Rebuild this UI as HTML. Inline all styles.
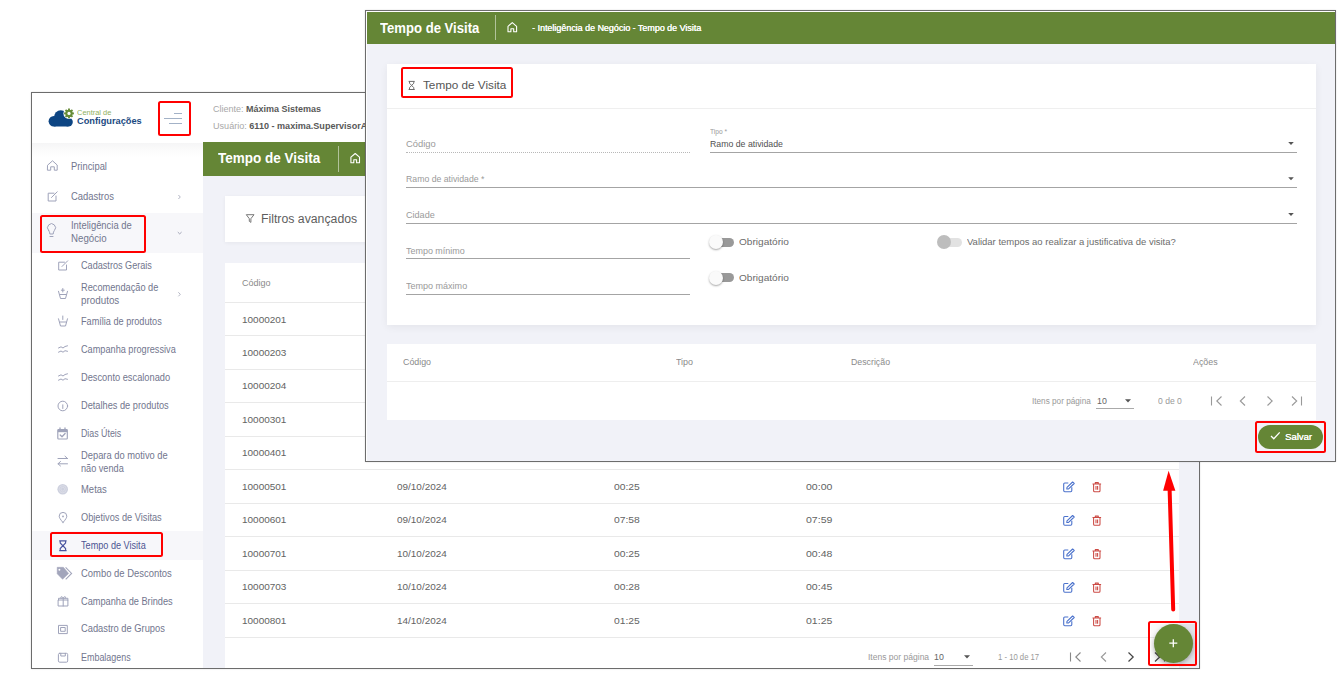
<!DOCTYPE html><html><head><meta charset="utf-8"><style>
html,body{margin:0;padding:0;}
body{width:1344px;height:676px;position:relative;overflow:hidden;background:#fff;font-family:"Liberation Sans",sans-serif;}
.t{position:absolute;white-space:nowrap;}
.r{position:absolute;box-sizing:border-box;}
svg{position:absolute;overflow:visible;}
</style></head><body>
<div class="r" style="left:31px;top:92px;width:1169px;height:577px;border:1px solid #6c6c6c;background:#fff;box-shadow:0 0 1.5px rgba(0,0,0,0.15);"></div>
<div class="r" style="left:203px;top:175px;width:996px;height:493px;background:#f1f2f8;"></div>
<div class="r" style="left:32px;top:142.5px;width:171px;height:14px;background:linear-gradient(#f5f5f6,#fcfcfc 60%,#fff);"></div>
<svg style="left:0;top:0" width="1344" height="676" viewBox="0 0 1344 676"><g fill="#0d4583">
<circle cx="53.8" cy="121.3" r="5.2"/><circle cx="60.8" cy="117" r="6.8"/><circle cx="68.3" cy="122" r="4.5"/>
<rect x="53.8" y="117" width="14.5" height="9.5"/></g>
<circle cx="69" cy="113.4" r="5.6" fill="#fff"/>
<g transform="translate(69,113.4)" fill="#678c37">
<circle r="3.7"/>
<rect x="-0.95" y="-4.9" width="1.9" height="9.8"/>
<rect x="-0.95" y="-4.9" width="1.9" height="9.8" transform="rotate(45)"/>
<rect x="-0.95" y="-4.9" width="1.9" height="9.8" transform="rotate(90)"/>
<rect x="-0.95" y="-4.9" width="1.9" height="9.8" transform="rotate(135)"/>
<circle r="1.6" fill="#fff"/>
</g></svg>
<div class="t" id="t1" style="left:77px;top:107.8px;font-size:7.5px;line-height:10px;color:#8fb060;font-weight:normal;transform:scaleX(0.9938);transform-origin:0 50%;">Central de</div>
<div class="t" id="t2" style="left:77px;top:115.3px;font-size:9.6px;line-height:12px;color:#1b4a82;font-weight:bold;transform:scaleX(0.9643);transform-origin:0 50%;">Configurações</div>
<div class="r" style="left:174px;top:112.7px;width:8.2px;height:1.1px;background:#a3b2c7;"></div>
<div class="r" style="left:164.2px;top:117.7px;width:18px;height:1.1px;background:#a3b2c7;"></div>
<div class="r" style="left:168.8px;top:122.7px;width:13.4px;height:1.1px;background:#a3b2c7;"></div>
<div class="r" style="left:158.4px;top:101.4px;width:32.8px;height:34.3px;border:2.9px solid #ff0000;border-radius:2.5px;"></div>
<div class="t" id="t3" style="left:212.7px;top:101.7px;font-size:9.5px;line-height:14px;color:#a8a8a8;font-weight:normal;transform:scaleX(0.9472);transform-origin:0 50%;">Cliente: <b style="color:#585858">Máxima Sistemas</b></div>
<div class="t" id="t4" style="left:212.7px;top:119.3px;font-size:9.5px;line-height:14px;color:#a8a8a8;font-weight:normal;transform:scaleX(0.9546);transform-origin:0 50%;">Usuário: <b style="color:#585858">6110 - maxima.SupervisorA</b></div>
<div class="r" style="left:203px;top:142px;width:996px;height:33.5px;background:#658636;"></div>
<div class="t" id="t5" style="left:218.4px;top:148.3px;font-size:14px;line-height:20px;color:#fff;font-weight:bold;transform:scaleX(0.9651);transform-origin:0 50%;">Tempo de Visita</div>
<div class="r" style="left:337.6px;top:145.6px;width:1.2px;height:26px;background:rgba(255,255,255,0.5);"></div>
<svg style="left:0;top:0" width="1344" height="676" viewBox="0 0 1344 676"><path d="M350.9 162.7 V157.2 L355.2 153.5 L359.5 157.2 V162.7 H356.6 V159.7 H353.8 V162.7 Z" fill="none" stroke="#fff" stroke-width="1.1" stroke-linejoin="round"/></svg>
<div class="t" id="t6" style="left:70.8px;top:159.5px;font-size:10.1px;line-height:13px;color:#72768e;font-weight:normal;transform:scaleX(0.9283);transform-origin:0 50%;">Principal</div>
<div class="t" id="t7" style="left:70.8px;top:190.0px;font-size:10.1px;line-height:13px;color:#72768e;font-weight:normal;transform:scaleX(0.9333);transform-origin:0 50%;">Cadastros</div>
<div class="r" style="left:31.5px;top:212.5px;width:171.5px;height:40.5px;background:#f7f7fa;"></div>
<div class="t" id="t8" style="left:70.8px;top:219.3px;font-size:10.1px;line-height:13px;color:#72768e;font-weight:normal;transform:scaleX(0.9330);transform-origin:0 50%;">Inteligência de</div>
<div class="t" id="t9" style="left:70.8px;top:232.3px;font-size:10.1px;line-height:13px;color:#72768e;font-weight:normal;transform:scaleX(0.9601);transform-origin:0 50%;">Negócio</div>
<div class="r" style="left:40.4px;top:214.9px;width:105.3px;height:37.8px;border:2.9px solid #ff0000;border-radius:2.5px;"></div>
<div class="r" style="left:31.5px;top:531px;width:171.5px;height:29px;background:#f7f7fa;"></div>
<div class="t" id="t10" style="left:81.3px;top:259.3px;font-size:10.1px;line-height:13px;color:#72768e;font-weight:normal;transform:scaleX(0.9029);transform-origin:0 50%;">Cadastros Gerais</div>
<div class="t" id="t11" style="left:81.3px;top:280.5px;font-size:10.1px;line-height:13px;color:#72768e;font-weight:normal;transform:scaleX(0.9126);transform-origin:0 50%;">Recomendação de</div>
<div class="t" id="t12" style="left:81.3px;top:293.8px;font-size:10.1px;line-height:13px;color:#72768e;font-weight:normal;transform:scaleX(0.9745);transform-origin:0 50%;">produtos</div>
<div class="t" id="t13" style="left:81.3px;top:315.4px;font-size:10.1px;line-height:13px;color:#72768e;font-weight:normal;transform:scaleX(0.9048);transform-origin:0 50%;">Família de produtos</div>
<div class="t" id="t14" style="left:81.3px;top:343.3px;font-size:10.1px;line-height:13px;color:#72768e;font-weight:normal;transform:scaleX(0.9077);transform-origin:0 50%;">Campanha progressiva</div>
<div class="t" id="t15" style="left:81.3px;top:371.1px;font-size:10.1px;line-height:13px;color:#72768e;font-weight:normal;transform:scaleX(0.9180);transform-origin:0 50%;">Desconto escalonado</div>
<div class="t" id="t16" style="left:81.3px;top:399.1px;font-size:10.1px;line-height:13px;color:#72768e;font-weight:normal;transform:scaleX(0.9142);transform-origin:0 50%;">Detalhes de produtos</div>
<div class="t" id="t17" style="left:81.3px;top:427.1px;font-size:10.1px;line-height:13px;color:#72768e;font-weight:normal;transform:scaleX(0.8739);transform-origin:0 50%;">Dias Úteis</div>
<div class="t" id="t18" style="left:81.3px;top:448.9px;font-size:10.1px;line-height:13px;color:#72768e;font-weight:normal;transform:scaleX(0.9257);transform-origin:0 50%;">Depara do motivo de</div>
<div class="t" id="t19" style="left:81.3px;top:462.2px;font-size:10.1px;line-height:13px;color:#72768e;font-weight:normal;transform:scaleX(0.9060);transform-origin:0 50%;">não venda</div>
<div class="t" id="t20" style="left:81.3px;top:482.8px;font-size:10.1px;line-height:13px;color:#72768e;font-weight:normal;transform:scaleX(0.9363);transform-origin:0 50%;">Metas</div>
<div class="t" id="t21" style="left:81.3px;top:510.79999999999995px;font-size:10.1px;line-height:13px;color:#72768e;font-weight:normal;transform:scaleX(0.9125);transform-origin:0 50%;">Objetivos de Visitas</div>
<div class="t" id="t22" style="left:81.3px;top:538.6px;font-size:10.1px;line-height:13px;color:#4d5592;font-weight:normal;transform:scaleX(0.9034);transform-origin:0 50%;">Tempo de Visita</div>
<div class="t" id="t23" style="left:81.3px;top:566.6px;font-size:10.1px;line-height:13px;color:#72768e;font-weight:normal;transform:scaleX(0.9348);transform-origin:0 50%;">Combo de Descontos</div>
<div class="t" id="t24" style="left:81.3px;top:594.8px;font-size:10.1px;line-height:13px;color:#72768e;font-weight:normal;transform:scaleX(0.9132);transform-origin:0 50%;">Campanha de Brindes</div>
<div class="t" id="t25" style="left:81.3px;top:622.3px;font-size:10.1px;line-height:13px;color:#72768e;font-weight:normal;transform:scaleX(0.9222);transform-origin:0 50%;">Cadastro de Grupos</div>
<div class="t" id="t26" style="left:81.3px;top:650.5px;font-size:10.1px;line-height:13px;color:#72768e;font-weight:normal;transform:scaleX(0.8857);transform-origin:0 50%;">Embalagens</div>
<div class="r" style="left:50.4px;top:532.1999999999999px;width:112.8px;height:24.8px;border:2.9px solid #ff0000;border-radius:2.5px;"></div>
<svg style="left:0;top:0" width="1344" height="676" viewBox="0 0 1344 676">
<path d="M178.4 195 L180.3 197 L178.4 199" fill="none" stroke="#a9acbc" stroke-width="0.9"/>
<path d="M178.4 292.3 L180.3 294.3 L178.4 296.3" fill="none" stroke="#a9acbc" stroke-width="0.9"/>
<path d="M177.8 232.1 L179.7 233.9 L181.6 232.1" fill="none" stroke="#9a9db0" stroke-width="0.9"/>
</svg>
<svg style="left:0;top:0" width="1344" height="676" viewBox="0 0 1344 676">
<path d="M47.8 165 L52.5 160.8 L57.2 165 V170.2 H54.3 V166.8 H50.7 V170.2 H47.8 Z" fill="none" stroke="#9fa3ba" stroke-width="1" stroke-linejoin="round" stroke-linecap="round"/>
<path d="M54 193.2 H48.2 V201 H56 V196" fill="none" stroke="#9fa3ba" stroke-width="1" stroke-linejoin="round" stroke-linecap="round"/><path d="M51.5 197.5 L57.2 191.8" fill="none" stroke="#9fa3ba" stroke-width="1" stroke-linejoin="round" stroke-linecap="round"/>
<path d="M48.6 230.5 A4 4 0 1 1 54.4 230.5 C53.6 231.6 53.2 232.5 53.2 234 H49.8 C49.8 232.5 49.4 231.6 48.6 230.5 Z" fill="none" stroke="#9fa3ba" stroke-width="1" stroke-linejoin="round" stroke-linecap="round"/><path d="M50 236.5 H53" fill="none" stroke="#9fa3ba" stroke-width="1" stroke-linejoin="round" stroke-linecap="round"/>
<path d="M64.5 262.2 H58.7 V270 H66.5 V265" fill="none" stroke="#9fa3ba" stroke-width="1" stroke-linejoin="round" stroke-linecap="round"/><path d="M62 266.5 L67.7 260.8" fill="none" stroke="#9fa3ba" stroke-width="1" stroke-linejoin="round" stroke-linecap="round"/>
<path d="M58.5 291.3 L60.5 298.5 H65.5 L67.5 291.3 M60 294.5 H66 M62.8 288.5 V292 M61.3 290.2 H64.3" fill="none" stroke="#9fa3ba" stroke-width="1" stroke-linejoin="round" stroke-linecap="round"/>
<path d="M58.5 318.8 L60.5 326 H65.5 L67.5 318.8 M60 322 H66 M62.8 316 V319.5" fill="none" stroke="#9fa3ba" stroke-width="1" stroke-linejoin="round" stroke-linecap="round"/>
<path d="M58.5 348 L61 346.8 L63 348 L65 346.5 L67.5 345.8 M58.5 352.2 L61 351 L63 352.2 L65 350.7 L67.5 351.3" fill="none" stroke="#9fa3ba" stroke-width="1" stroke-linejoin="round" stroke-linecap="round"/>
<path d="M58.5 376 L61 374.8 L63 376 L65 374.5 L67.5 373.8 M58.5 380.2 L61 379 L63 380.2 L65 378.7 L67.5 379.3" fill="none" stroke="#9fa3ba" stroke-width="1" stroke-linejoin="round" stroke-linecap="round"/>
<circle cx="62.8" cy="406" r="4.8" fill="none" stroke="#9fa3ba" stroke-width="1" stroke-linejoin="round" stroke-linecap="round"/><path d="M62.8 404.8 V408.5" fill="none" stroke="#9fa3ba" stroke-width="1" stroke-linejoin="round" stroke-linecap="round"/>
<rect x="57.8" y="429.6" width="9.5" height="9.4" rx="0.8" fill="none" stroke="#9fa3ba" stroke-linejoin="round" stroke-linecap="round" stroke-width="1.15"/><rect x="57.8" y="429.6" width="9.5" height="2.6" fill="#9fa3ba"/><path d="M60 428 V430 M65 428 V430 M60.2 435 L62 436.7 L65.1 433.5" fill="none" stroke="#9fa3ba" stroke-linejoin="round" stroke-linecap="round" stroke-width="1.3"/>
<path d="M58 458.5 H67.5 M65 456.2 L67.5 458.5 M67.5 463.8 H58 M60.5 461.5 L58 463.8 L60.5 466" fill="none" stroke="#9fa3ba" stroke-width="1" stroke-linejoin="round" stroke-linecap="round"/>
<circle cx="62.7" cy="489.2" r="5.3" fill="#cdd0de"/><circle cx="62.7" cy="489.2" r="3.6" fill="none" stroke="#dfe1ea" stroke-width="0.7"/><circle cx="62.7" cy="489.2" r="1.9" fill="none" stroke="#dfe1ea" stroke-width="0.7"/>
<path d="M63 522.5 C60 519 59.2 517.5 59.2 516.2 A3.8 3.8 0 0 1 66.8 516.2 C66.8 517.5 66 519 63 522.5 Z" fill="none" stroke="#9fa3ba" stroke-width="1" stroke-linejoin="round" stroke-linecap="round"/><circle cx="63" cy="516.4" r="0.9" fill="#9fa3ba"/>
<path d="M59.2 540.9 H66.6 M59.2 550.6 H66.6 M60.2 541 V543 L62.9 545.75 L60.2 548.5 V550.5 M65.6 541 V543 L62.9 545.75 L65.6 548.5 V550.5" fill="none" stroke="#4a55a0" stroke-width="1.15"/>
<path d="M57.2 567.3 H63.4 L68.6 573.4 L62.6 579.3 L57.2 573.8 Z" fill="#a2a5bb" stroke="#a2a5bb" stroke-width="0.5" stroke-linejoin="round"/><path d="M65.6 567.3 L71.6 573.4 L65.7 579.3" fill="none" stroke="#a2a5bb" stroke-width="1.1"/><circle cx="59.4" cy="569.7" r="0.95" fill="#fff"/>
<rect x="58.5" y="600" width="9.4" height="6" fill="none" stroke="#9fa3ba" stroke-width="1" stroke-linejoin="round" stroke-linecap="round"/><path d="M58.5 600 V598.3 H67.9 V600 M63.2 598.3 V606 M61 598 C60 596.5 62 596 63.2 598 C64.4 596 66.4 596.5 65.4 598" fill="none" stroke="#9fa3ba" stroke-width="1" stroke-linejoin="round" stroke-linecap="round"/>
<rect x="58.9" y="625.4" width="8.4" height="8.2" fill="none" stroke="#9fa3ba" stroke-width="1" stroke-linejoin="round" stroke-linecap="round"/><rect x="61" y="627.5" width="4.2" height="3.8" fill="none" stroke="#9fa3ba" stroke-width="1" stroke-linejoin="round" stroke-linecap="round"/>
<rect x="58.4" y="653.3" width="9.3" height="8.9" rx="1.3" fill="none" stroke="#9fa3ba" stroke-width="1" stroke-linejoin="round" stroke-linecap="round"/><path d="M60.8 653.3 V656 H65.3 V653.3" fill="none" stroke="#9fa3ba" stroke-width="1" stroke-linejoin="round" stroke-linecap="round"/>
</svg>
<div class="r" style="left:224.5px;top:196.4px;width:160px;height:46px;background:#fff;box-shadow:0 1px 4px rgba(0,0,0,0.05);"></div>
<svg style="left:0;top:0" width="1344" height="676" viewBox="0 0 1344 676"><path d="M246.3 214.7 H254 L250.9 218.7 V222.4 L249.3 221.3 V218.7 Z" fill="none" stroke="#707070" stroke-width="0.95" stroke-linejoin="round"/></svg>
<div class="t" id="t27" style="left:261px;top:209.5px;font-size:12.5px;line-height:18px;color:#5e5e5e;font-weight:normal;transform:scaleX(0.9818);transform-origin:0 50%;">Filtros avançados</div>
<div class="r" style="left:224.5px;top:263px;width:954px;height:405px;background:#fff;"></div>
<div class="t" id="t28" style="left:241.5px;top:276.6px;font-size:8.6px;line-height:12px;color:#8a8a8a;font-weight:normal;transform:scaleX(1.0479);transform-origin:0 50%;">Código</div>
<div class="r" style="left:224.5px;top:302px;width:954px;height:1px;background:#e6e6e6;"></div>
<div class="r" style="left:224.5px;top:302.2px;width:954px;height:1px;background:#e9e9e9;"></div>
<div class="r" style="left:224.5px;top:335.3px;width:954px;height:1px;background:#e9e9e9;"></div>
<div class="r" style="left:224.5px;top:368.8px;width:954px;height:1px;background:#e9e9e9;"></div>
<div class="r" style="left:224.5px;top:402.3px;width:954px;height:1px;background:#e9e9e9;"></div>
<div class="r" style="left:224.5px;top:435.8px;width:954px;height:1px;background:#e9e9e9;"></div>
<div class="r" style="left:224.5px;top:469.3px;width:954px;height:1px;background:#e9e9e9;"></div>
<div class="r" style="left:224.5px;top:502.8px;width:954px;height:1px;background:#e9e9e9;"></div>
<div class="r" style="left:224.5px;top:536.3px;width:954px;height:1px;background:#e9e9e9;"></div>
<div class="r" style="left:224.5px;top:569.8px;width:954px;height:1px;background:#e9e9e9;"></div>
<div class="r" style="left:224.5px;top:603.3px;width:954px;height:1px;background:#e9e9e9;"></div>
<div class="r" style="left:224.5px;top:636.8px;width:954px;height:1px;background:#e9e9e9;"></div>
<div class="t" id="t29" style="left:241.7px;top:312.5px;font-size:9.8px;line-height:14px;color:#636363;font-weight:normal;transform:scaleX(1.0188);transform-origin:0 50%;">10000201</div>
<div class="t" id="t30" style="left:241.7px;top:345.6px;font-size:9.8px;line-height:14px;color:#636363;font-weight:normal;transform:scaleX(1.0188);transform-origin:0 50%;">10000203</div>
<div class="t" id="t31" style="left:241.7px;top:379.1px;font-size:9.8px;line-height:14px;color:#636363;font-weight:normal;transform:scaleX(1.0188);transform-origin:0 50%;">10000204</div>
<div class="t" id="t32" style="left:241.7px;top:412.6px;font-size:9.8px;line-height:14px;color:#636363;font-weight:normal;transform:scaleX(1.0188);transform-origin:0 50%;">10000301</div>
<div class="t" id="t33" style="left:241.7px;top:446.1px;font-size:9.8px;line-height:14px;color:#636363;font-weight:normal;transform:scaleX(1.0188);transform-origin:0 50%;">10000401</div>
<div class="t" id="t34" style="left:241.7px;top:479.6px;font-size:9.8px;line-height:14px;color:#636363;font-weight:normal;transform:scaleX(1.0188);transform-origin:0 50%;">10000501</div>
<div class="t" id="t35" style="left:397.2px;top:479.6px;font-size:9.8px;line-height:14px;color:#636363;font-weight:normal;transform:scaleX(1.0156);transform-origin:0 50%;">09/10/2024</div>
<div class="t" id="t36" style="left:614px;top:479.6px;font-size:9.8px;line-height:14px;color:#636363;font-weight:normal;transform:scaleX(1.0535);transform-origin:0 50%;">00:25</div>
<div class="t" id="t37" style="left:806.4px;top:479.6px;font-size:9.8px;line-height:14px;color:#636363;font-weight:normal;transform:scaleX(1.0745);transform-origin:0 50%;">00:00</div>
<svg style="left:0;top:0" width="1344" height="676" viewBox="0 0 1344 676"><path d="M1068.3 483.00000000000006 H1064.8 Q1063.7 483.00000000000006 1063.7 484.1 V490.6 Q1063.7 491.70000000000005 1064.8 491.70000000000005 H1070.7 Q1071.8 491.70000000000005 1071.8 490.6 V487.20000000000005" fill="none" stroke="#4b72cc" stroke-width="1.1" stroke-linejoin="round"/>
<path d="M1066.8 489.00000000000006 L1067 487.40000000000003 L1072.6 482.00000000000006 L1074.2 483.50000000000006 L1068.6 488.90000000000003 Z" fill="none" stroke="#4b72cc" stroke-width="1.1" stroke-linejoin="round"/>
<path d="M1093.6 484.40000000000003 V490.70000000000005 Q1093.6 491.70000000000005 1094.6 491.70000000000005 H1099 Q1100 491.70000000000005 1100 490.70000000000005 V484.40000000000003 M1092.5 484.00000000000006 H1101.1 M1095.3 483.80000000000007 V482.6 H1098.3 V483.80000000000007 M1096 486.00000000000006 V489.80000000000007 M1097.6 486.00000000000006 V489.80000000000007" fill="none" stroke="#cc4a44" stroke-width="1.05" stroke-linejoin="round"/></svg>
<div class="t" id="t38" style="left:241.7px;top:513.1px;font-size:9.8px;line-height:14px;color:#636363;font-weight:normal;transform:scaleX(1.0188);transform-origin:0 50%;">10000601</div>
<div class="t" id="t39" style="left:397.2px;top:513.1px;font-size:9.8px;line-height:14px;color:#636363;font-weight:normal;transform:scaleX(1.0156);transform-origin:0 50%;">09/10/2024</div>
<div class="t" id="t40" style="left:614px;top:513.1px;font-size:9.8px;line-height:14px;color:#636363;font-weight:normal;transform:scaleX(1.0535);transform-origin:0 50%;">07:58</div>
<div class="t" id="t41" style="left:806.4px;top:513.1px;font-size:9.8px;line-height:14px;color:#636363;font-weight:normal;transform:scaleX(1.0745);transform-origin:0 50%;">07:59</div>
<svg style="left:0;top:0" width="1344" height="676" viewBox="0 0 1344 676"><path d="M1068.3 516.5 H1064.8 Q1063.7 516.5 1063.7 517.6 V524.1 Q1063.7 525.2 1064.8 525.2 H1070.7 Q1071.8 525.2 1071.8 524.1 V520.7" fill="none" stroke="#4b72cc" stroke-width="1.1" stroke-linejoin="round"/>
<path d="M1066.8 522.5 L1067 520.9000000000001 L1072.6 515.5 L1074.2 517.0 L1068.6 522.4000000000001 Z" fill="none" stroke="#4b72cc" stroke-width="1.1" stroke-linejoin="round"/>
<path d="M1093.6 517.9000000000001 V524.2 Q1093.6 525.2 1094.6 525.2 H1099 Q1100 525.2 1100 524.2 V517.9000000000001 M1092.5 517.5 H1101.1 M1095.3 517.3000000000001 V516.1 H1098.3 V517.3000000000001 M1096 519.5 V523.3000000000001 M1097.6 519.5 V523.3000000000001" fill="none" stroke="#cc4a44" stroke-width="1.05" stroke-linejoin="round"/></svg>
<div class="t" id="t42" style="left:241.7px;top:546.5999999999999px;font-size:9.8px;line-height:14px;color:#636363;font-weight:normal;transform:scaleX(1.0188);transform-origin:0 50%;">10000701</div>
<div class="t" id="t43" style="left:397.2px;top:546.5999999999999px;font-size:9.8px;line-height:14px;color:#636363;font-weight:normal;transform:scaleX(1.0156);transform-origin:0 50%;">10/10/2024</div>
<div class="t" id="t44" style="left:614px;top:546.5999999999999px;font-size:9.8px;line-height:14px;color:#636363;font-weight:normal;transform:scaleX(1.0535);transform-origin:0 50%;">00:25</div>
<div class="t" id="t45" style="left:806.4px;top:546.5999999999999px;font-size:9.8px;line-height:14px;color:#636363;font-weight:normal;transform:scaleX(1.0745);transform-origin:0 50%;">00:48</div>
<svg style="left:0;top:0" width="1344" height="676" viewBox="0 0 1344 676"><path d="M1068.3 549.9999999999999 H1064.8 Q1063.7 549.9999999999999 1063.7 551.0999999999999 V557.5999999999999 Q1063.7 558.6999999999999 1064.8 558.6999999999999 H1070.7 Q1071.8 558.6999999999999 1071.8 557.5999999999999 V554.1999999999999" fill="none" stroke="#4b72cc" stroke-width="1.1" stroke-linejoin="round"/>
<path d="M1066.8 555.9999999999999 L1067 554.4 L1072.6 548.9999999999999 L1074.2 550.4999999999999 L1068.6 555.9 Z" fill="none" stroke="#4b72cc" stroke-width="1.1" stroke-linejoin="round"/>
<path d="M1093.6 551.4 V557.6999999999999 Q1093.6 558.6999999999999 1094.6 558.6999999999999 H1099 Q1100 558.6999999999999 1100 557.6999999999999 V551.4 M1092.5 550.9999999999999 H1101.1 M1095.3 550.8 V549.5999999999999 H1098.3 V550.8 M1096 552.9999999999999 V556.8 M1097.6 552.9999999999999 V556.8" fill="none" stroke="#cc4a44" stroke-width="1.05" stroke-linejoin="round"/></svg>
<div class="t" id="t46" style="left:241.7px;top:580.0999999999999px;font-size:9.8px;line-height:14px;color:#636363;font-weight:normal;transform:scaleX(1.0188);transform-origin:0 50%;">10000703</div>
<div class="t" id="t47" style="left:397.2px;top:580.0999999999999px;font-size:9.8px;line-height:14px;color:#636363;font-weight:normal;transform:scaleX(1.0156);transform-origin:0 50%;">10/10/2024</div>
<div class="t" id="t48" style="left:614px;top:580.0999999999999px;font-size:9.8px;line-height:14px;color:#636363;font-weight:normal;transform:scaleX(1.0535);transform-origin:0 50%;">00:28</div>
<div class="t" id="t49" style="left:806.4px;top:580.0999999999999px;font-size:9.8px;line-height:14px;color:#636363;font-weight:normal;transform:scaleX(1.0745);transform-origin:0 50%;">00:45</div>
<svg style="left:0;top:0" width="1344" height="676" viewBox="0 0 1344 676"><path d="M1068.3 583.4999999999999 H1064.8 Q1063.7 583.4999999999999 1063.7 584.5999999999999 V591.0999999999999 Q1063.7 592.1999999999999 1064.8 592.1999999999999 H1070.7 Q1071.8 592.1999999999999 1071.8 591.0999999999999 V587.6999999999999" fill="none" stroke="#4b72cc" stroke-width="1.1" stroke-linejoin="round"/>
<path d="M1066.8 589.4999999999999 L1067 587.9 L1072.6 582.4999999999999 L1074.2 583.9999999999999 L1068.6 589.4 Z" fill="none" stroke="#4b72cc" stroke-width="1.1" stroke-linejoin="round"/>
<path d="M1093.6 584.9 V591.1999999999999 Q1093.6 592.1999999999999 1094.6 592.1999999999999 H1099 Q1100 592.1999999999999 1100 591.1999999999999 V584.9 M1092.5 584.4999999999999 H1101.1 M1095.3 584.3 V583.0999999999999 H1098.3 V584.3 M1096 586.4999999999999 V590.3 M1097.6 586.4999999999999 V590.3" fill="none" stroke="#cc4a44" stroke-width="1.05" stroke-linejoin="round"/></svg>
<div class="t" id="t50" style="left:241.7px;top:613.5999999999999px;font-size:9.8px;line-height:14px;color:#636363;font-weight:normal;transform:scaleX(1.0188);transform-origin:0 50%;">10000801</div>
<div class="t" id="t51" style="left:397.2px;top:613.5999999999999px;font-size:9.8px;line-height:14px;color:#636363;font-weight:normal;transform:scaleX(1.0156);transform-origin:0 50%;">14/10/2024</div>
<div class="t" id="t52" style="left:614px;top:613.5999999999999px;font-size:9.8px;line-height:14px;color:#636363;font-weight:normal;transform:scaleX(1.0535);transform-origin:0 50%;">01:25</div>
<div class="t" id="t53" style="left:806.4px;top:613.5999999999999px;font-size:9.8px;line-height:14px;color:#636363;font-weight:normal;transform:scaleX(1.0745);transform-origin:0 50%;">01:25</div>
<svg style="left:0;top:0" width="1344" height="676" viewBox="0 0 1344 676"><path d="M1068.3 616.9999999999999 H1064.8 Q1063.7 616.9999999999999 1063.7 618.0999999999999 V624.5999999999999 Q1063.7 625.6999999999999 1064.8 625.6999999999999 H1070.7 Q1071.8 625.6999999999999 1071.8 624.5999999999999 V621.1999999999999" fill="none" stroke="#4b72cc" stroke-width="1.1" stroke-linejoin="round"/>
<path d="M1066.8 622.9999999999999 L1067 621.4 L1072.6 615.9999999999999 L1074.2 617.4999999999999 L1068.6 622.9 Z" fill="none" stroke="#4b72cc" stroke-width="1.1" stroke-linejoin="round"/>
<path d="M1093.6 618.4 V624.6999999999999 Q1093.6 625.6999999999999 1094.6 625.6999999999999 H1099 Q1100 625.6999999999999 1100 624.6999999999999 V618.4 M1092.5 617.9999999999999 H1101.1 M1095.3 617.8 V616.5999999999999 H1098.3 V617.8 M1096 619.9999999999999 V623.8 M1097.6 619.9999999999999 V623.8" fill="none" stroke="#cc4a44" stroke-width="1.05" stroke-linejoin="round"/></svg>
<div class="t" id="t54" style="left:867.7px;top:650.8px;font-size:8.3px;line-height:12px;color:#999;font-weight:normal;transform:scaleX(1.0270);transform-origin:0 50%;">Itens por página</div>
<div class="t" id="t55" style="left:933.8px;top:650.8px;font-size:8.6px;line-height:12px;color:#666;font-weight:normal;transform:scaleX(1.0271);transform-origin:0 50%;">10</div>
<div class="r" style="left:934px;top:664.5px;width:38.5px;height:1px;background:#aaa;"></div>
<svg style="left:0;top:0" width="1344" height="676" viewBox="0 0 1344 676"><path d="M964 655.3 H970 L967 658.6 Z" fill="#555"/></svg>
<div class="t" id="t56" style="left:998.4px;top:650.8px;font-size:8.3px;line-height:12px;color:#999;font-weight:normal;transform:scaleX(0.9288);transform-origin:0 50%;">1 - 10 de 17</div>
<svg style="left:0;top:0" width="1344" height="676" viewBox="0 0 1344 676"><path d="M1070.5 652.5 V661.5 M1080.5 652.5 L1075.8 657 L1080.5 661.5" fill="none" stroke="#888" stroke-width="1.1"/>
<path d="M1106 652.5 L1101.3 657 L1106 661.5" fill="none" stroke="#999" stroke-width="1.1"/>
<path d="M1128.5 652.5 L1133.2 657 L1128.5 661.5" fill="none" stroke="#444" stroke-width="1.2"/>
<path d="M1155 652.5 L1159.7 657 L1155 661.5 M1164.5 652.5 V661.5" fill="none" stroke="#444" stroke-width="1.2"/></svg>
<div class="r" style="left:365px;top:10px;width:971px;height:452px;border:1px solid #6c6c6c;background:#f1f2f8;box-shadow:0 0 1.5px rgba(0,0,0,0.15);"></div>
<div class="r" style="left:366px;top:11px;width:969px;height:33px;background:#fff;"></div>
<div class="r" style="left:366px;top:11px;width:1px;height:450px;background:#fff;"></div>
<div class="r" style="left:367px;top:12px;width:968px;height:32px;background:#658636;"></div>
<div class="t" id="t57" style="left:380.2px;top:17.5px;font-size:14px;line-height:20px;color:#fff;font-weight:bold;transform:scaleX(0.9366);transform-origin:0 50%;">Tempo de Visita</div>
<div class="r" style="left:495.3px;top:15px;width:1.2px;height:25px;background:rgba(255,255,255,0.5);"></div>
<svg style="left:0;top:0" width="1344" height="676" viewBox="0 0 1344 676"><path d="M508 31.8 V26.3 L512.3 22.6 L516.6 26.3 V31.8 H513.7 V28.8 H510.9 V31.8 Z" fill="none" stroke="#fff" stroke-width="1.1" stroke-linejoin="round"/></svg>
<div class="t" id="t58" style="left:531.7px;top:21.6px;font-size:8.7px;line-height:12px;color:#fff;font-weight:normal;transform:scaleX(1.0259);transform-origin:0 50%;text-shadow:0.25px 0 0 #fff;">- Inteligência de Negócio - Tempo de Visita</div>
<div class="r" style="left:386.7px;top:64px;width:929.5px;height:261px;background:#fff;box-shadow:0 2px 8px rgba(0,0,0,0.06);"></div>
<div class="r" style="left:386.7px;top:108px;width:929.5px;height:1px;background:#efefef;"></div>
<svg style="left:0;top:0" width="1344" height="676" viewBox="0 0 1344 676"><path d="M408.6 81.4 H414.7 M408.6 89.5 H414.7 M409.5 81.5 V83.2 L411.65 85.45 L409.5 87.7 V89.4 M413.8 81.5 V83.2 L411.65 85.45 L413.8 87.7 V89.4" fill="none" stroke="#666" stroke-width="0.95"/></svg>
<div class="t" id="t59" style="left:422.7px;top:77.3px;font-size:11.2px;line-height:16px;color:#555;font-weight:normal;transform:scaleX(1.0495);transform-origin:0 50%;">Tempo de Visita</div>
<div class="r" style="left:400.79999999999995px;top:67.4px;width:112.2px;height:30.3px;border:2.9px solid #ff0000;border-radius:2.5px;"></div>
<div class="t" id="t60" style="left:406.2px;top:137.1px;font-size:9.6px;line-height:14px;color:#9a9a9a;font-weight:normal;transform:scaleX(0.9761);transform-origin:0 50%;">Código</div>
<div class="r" style="left:406px;top:152px;width:284px;height:1px;border-top:1px dotted #b8b8b8;"></div>
<div class="t" id="t61" style="left:709.8px;top:126.9px;font-size:6.5px;line-height:9px;color:#999;font-weight:normal;transform:scaleX(1.0157);transform-origin:0 50%;">Tipo *</div>
<div class="t" id="t62" style="left:709.8px;top:137.0px;font-size:9.6px;line-height:14px;color:#505050;font-weight:normal;transform:scaleX(0.9116);transform-origin:0 50%;">Ramo de atividade</div>
<div class="r" style="left:709.6px;top:152px;width:587px;height:1px;background:#a4a4a4;"></div>
<div class="t" id="t63" style="left:406.2px;top:172.3px;font-size:9.6px;line-height:14px;color:#9a9a9a;font-weight:normal;transform:scaleX(0.9076);transform-origin:0 50%;">Ramo de atividade *</div>
<div class="r" style="left:406px;top:187px;width:891px;height:1px;background:#a4a4a4;"></div>
<div class="t" id="t64" style="left:406.2px;top:208.2px;font-size:9.6px;line-height:14px;color:#9a9a9a;font-weight:normal;transform:scaleX(0.9457);transform-origin:0 50%;">Cidade</div>
<div class="r" style="left:406px;top:222.5px;width:891px;height:1px;background:#a4a4a4;"></div>
<div class="t" id="t65" style="left:406.2px;top:243.7px;font-size:9.6px;line-height:14px;color:#9a9a9a;font-weight:normal;transform:scaleX(0.9336);transform-origin:0 50%;">Tempo mínimo</div>
<div class="r" style="left:406px;top:258px;width:284px;height:1px;background:#a4a4a4;"></div>
<div class="t" id="t66" style="left:406.2px;top:279.3px;font-size:9.6px;line-height:14px;color:#9a9a9a;font-weight:normal;transform:scaleX(0.9401);transform-origin:0 50%;">Tempo máximo</div>
<div class="r" style="left:406px;top:294px;width:284px;height:1px;background:#a4a4a4;"></div>
<svg style="left:0;top:0" width="1344" height="676" viewBox="0 0 1344 676"><path d="M1288.2 142 H1293.8 L1291 145 Z M1288.2 177.3 H1293.8 L1291 180.3 Z M1288.2 213 H1293.8 L1291 216 Z" fill="#555"/></svg>
<div class="r" style="left:711px;top:237.9px;width:23px;height:9px;background:#999;border-radius:5px;"></div>
<div class="r" style="left:709.3px;top:235.4px;width:14px;height:14px;border-radius:50%;background:#fafafa;box-shadow:0 1px 2px rgba(0,0,0,0.35);"></div>
<div class="r" style="left:711px;top:273.3px;width:23px;height:9px;background:#999;border-radius:5px;"></div>
<div class="r" style="left:709.3px;top:270.8px;width:14px;height:14px;border-radius:50%;background:#fafafa;box-shadow:0 1px 2px rgba(0,0,0,0.35);"></div>
<div class="r" style="left:938px;top:237.9px;width:23.5px;height:9px;background:#e2e2e2;border-radius:5px;"></div>
<div class="r" style="left:936.5px;top:235.4px;width:14px;height:14px;border-radius:50%;background:#bdbdbd;"></div>
<div class="t" id="t67" style="left:739.4px;top:235.0px;font-size:9.6px;line-height:14px;color:#6c6c6c;font-weight:normal;transform:scaleX(1.0500);transform-origin:0 50%;">Obrigatório</div>
<div class="t" id="t68" style="left:739.4px;top:270.8px;font-size:9.6px;line-height:14px;color:#6c6c6c;font-weight:normal;transform:scaleX(1.0500);transform-origin:0 50%;">Obrigatório</div>
<div class="t" id="t69" style="left:967px;top:235.0px;font-size:9.6px;line-height:14px;color:#6c6c6c;font-weight:normal;transform:scaleX(0.9870);transform-origin:0 50%;">Validar tempos ao realizar a justificativa de visita?</div>
<div class="r" style="left:386.7px;top:343.5px;width:929.5px;height:76.5px;background:#fff;"></div>
<div class="r" style="left:386.7px;top:380.5px;width:929.5px;height:1px;background:#eeeeee;"></div>
<div class="t" id="t70" style="left:402.8px;top:356.0px;font-size:8.6px;line-height:12px;color:#8a8a8a;font-weight:normal;transform:scaleX(1.0290);transform-origin:0 50%;">Código</div>
<div class="t" id="t71" style="left:676px;top:356.0px;font-size:8.6px;line-height:12px;color:#8a8a8a;font-weight:normal;transform:scaleX(1.0380);transform-origin:0 50%;">Tipo</div>
<div class="t" id="t72" style="left:850.5px;top:356.0px;font-size:8.6px;line-height:12px;color:#8a8a8a;font-weight:normal;transform:scaleX(1.0209);transform-origin:0 50%;">Descrição</div>
<div class="t" id="t73" style="left:1193px;top:356.0px;font-size:8.6px;line-height:12px;color:#8a8a8a;font-weight:normal;transform:scaleX(1.0307);transform-origin:0 50%;">Ações</div>
<div class="t" id="t74" style="left:1032.4px;top:394.7px;font-size:8.3px;line-height:12px;color:#999;font-weight:normal;transform:scaleX(0.9878);transform-origin:0 50%;">Itens por página</div>
<div class="t" id="t75" style="left:1096.8px;top:394.7px;font-size:8.6px;line-height:12px;color:#666;font-weight:normal;transform:scaleX(1.0271);transform-origin:0 50%;">10</div>
<div class="r" style="left:1096px;top:407.5px;width:37.6px;height:1px;background:#aaa;"></div>
<svg style="left:0;top:0" width="1344" height="676" viewBox="0 0 1344 676"><path d="M1125 399.3 H1131 L1128 402.6 Z" fill="#555"/></svg>
<div class="t" id="t76" style="left:1158px;top:394.7px;font-size:8.3px;line-height:12px;color:#999;font-weight:normal;transform:scaleX(1.0324);transform-origin:0 50%;">0 de 0</div>
<svg style="left:0;top:0" width="1344" height="676" viewBox="0 0 1344 676"><path d="M1211.5 396.5 V405.5 M1221.5 396.5 L1216.8 401 L1221.5 405.5" fill="none" stroke="#999" stroke-width="1.1"/>
<path d="M1245 396.5 L1240.3 401 L1245 405.5" fill="none" stroke="#999" stroke-width="1.1"/>
<path d="M1267.5 396.5 L1272.2 401 L1267.5 405.5" fill="none" stroke="#999" stroke-width="1.1"/>
<path d="M1292 396.5 L1296.7 401 L1292 405.5 M1301.5 396.5 V405.5" fill="none" stroke="#999" stroke-width="1.1"/></svg>
<div class="r" style="left:1258px;top:425px;width:65px;height:24px;background:#658636;border-radius:12px;"></div>
<svg style="left:0;top:0" width="1344" height="676" viewBox="0 0 1344 676"><path d="M1271 436 L1273.8 438.7 L1279.7 432.4" fill="none" stroke="#fff" stroke-width="1.3"/></svg>
<div class="t" id="t77" style="left:1285.4px;top:429.8px;font-size:9.6px;line-height:14px;color:#fff;font-weight:normal;transform:scaleX(0.9923);transform-origin:0 50%;text-shadow:0.3px 0 0 #fff;">Salvar</div>
<div class="r" style="left:1255.4px;top:421.4px;width:70.3px;height:31.3px;border:2.9px solid #ff0000;border-radius:2.5px;"></div>
<div class="r" style="left:1151px;top:624px;width:43.5px;height:39.5px;background:linear-gradient(90deg,rgba(0,0,0,0.02),rgba(0,0,0,0.07));"></div>
<div class="r" style="left:1153.8px;top:623.7px;width:39px;height:39px;border-radius:50%;background:#658636;box-shadow:0 2px 5px rgba(0,0,0,0.3);"></div>
<svg style="left:0;top:0" width="1344" height="676" viewBox="0 0 1344 676"><path d="M1173.3 639.2 V647.2 M1169.3 643.2 H1177.3" stroke="#fff" stroke-width="1.3"/></svg>
<div class="r" style="left:1148.4px;top:621.4px;width:48.3px;height:44.3px;border:2.9px solid #ff0000;border-radius:2.5px;"></div>
<svg style="left:0;top:0" width="1344" height="676" viewBox="0 0 1344 676"><path d="M1169.6 489 L1173.2 609.5" stroke="#f00" stroke-width="4" stroke-linecap="round"/>
<path d="M1168.6 470.8 L1175.4 490.8 L1163.1 490.8 Z" fill="#f00"/></svg>
</body></html>
